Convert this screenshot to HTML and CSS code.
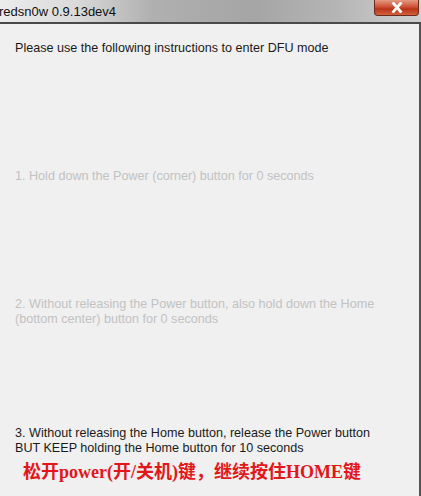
FILE: index.html
```html
<!DOCTYPE html>
<html>
<head>
<meta charset="utf-8">
<link rel="stylesheet" href="styles.css">
</head>
<body>
<div class="window">
  <div class="titlebar">
    <span class="title">redsn0w 0.9.13dev4</span>
    <div class="close">
      <svg width="14" height="11" viewBox="0 0 14 11"><path d="M3.5 1.5 L10.5 9.5 M10.5 1.5 L3.5 9.5" stroke="#fff" stroke-width="2.8" stroke-linecap="square"/></svg>
    </div>
  </div>
  <div class="content">
    <p class="intro">Please use the following instructions to enter DFU mode</p>
    <p class="step step1 dim">1. Hold down the Power (corner) button for 0 seconds</p>
    <p class="step step2 dim">2. Without releasing the Power button, also hold down the Home<br>(bottom center) button for 0 seconds</p>
    <p class="step step3">3. Without releasing the Home button, release the Power button<br>BUT KEEP holding the Home button for 10 seconds</p>
    <p class="note">松开<span class="lat">power(</span>开<span class="lat">/</span>关机<span class="lat">)</span>键，继续按住<span class="lat">HOME</span>键</p>
  </div>
</div>
</body>
</html>
```
FILE: styles.css
```css
html, body { margin: 0; padding: 0; }
body { width: 421px; height: 496px; overflow: hidden; background: #f0f0f0; }
.window { width: 421px; height: 496px; display: flex; flex-direction: column; }
.titlebar {
  height: 22px;
  flex: none;
  display: flex;
  align-items: flex-start;
  justify-content: space-between;
  background: linear-gradient(to right, #ececec 0%, #dadada 18%, #b0b0b0 36%, #a5a5a5 60%, #b5b5b5 80%, #d0d0d0 100%);
  border-bottom: 2px solid #4a4a4a;
}
.title {
  font-family: "Liberation Sans", Arial, sans-serif;
  font-size: 13px;
  color: #111;
  margin-left: -1px;
  margin-top: 4px;
}
.close {
  width: 45px;
  height: 16px;
  margin-right: 2px;
  border: 1px solid #6b2a1e;
  border-top: none;
  border-radius: 0 0 4px 4px;
  background: linear-gradient(to bottom, #e49a82 0%, #cf5234 45%, #b93418 60%, #d4623f 100%);
  display: flex;
  align-items: center;
  justify-content: center;
  box-sizing: border-box;
}
.content {
  flex: 1;
  background: #f0f0f0;
  border-right: 2px solid #555;
  font-family: "Liberation Sans", Arial, sans-serif;
  font-size: 12.6px;
  color: #1a1a1a;
  padding-left: 15px;
}
p { margin: 0; line-height: 15px; }
.intro { margin-top: 17px; }
.step1 { margin-top: 113px; }
.step2 { margin-top: 113px; }
.step3 { margin-top: 99px; }
.dim { color: #c2c2c2; }
.note {
  margin-top: 4px;
  margin-left: 8px;
  color: #e3171a;
  font-family: "Liberation Serif", "Noto Sans CJK SC", serif;
  font-weight: bold;
  font-size: 18px;
  line-height: 24px;
}
.note .lat { font-family: "Liberation Serif", serif; }
```
